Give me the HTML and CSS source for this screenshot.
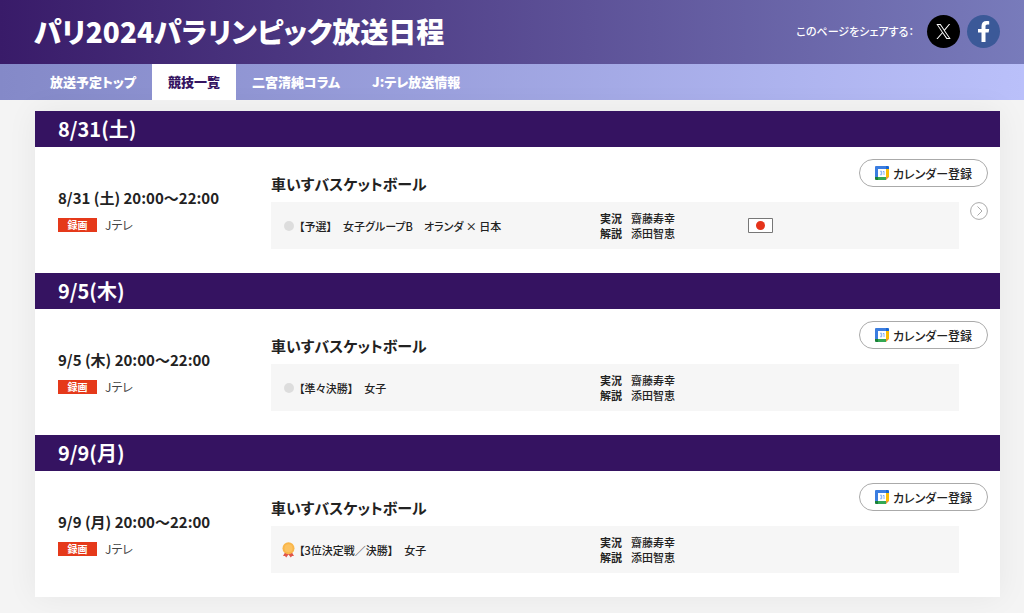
FILE: index.html
```html
<!DOCTYPE html>
<html lang="ja">
<head>
<meta charset="utf-8">
<meta name="viewport" content="width=device-width, initial-scale=1">
<title>パリ2024パラリンピック放送日程</title>
<link rel="stylesheet" href="styles.css">
</head>
<body>
<svg class="sprite" aria-hidden="true">
  <symbol id="calendar" viewBox="0 0 28 28">
    <path fill="#fff" d="M6 6h16v16H6z"/>
    <path fill="#3b7de0" d="M0 2a2 2 0 0 1 2-2h20v6H6v16H0z"/>
    <path fill="#1967d2" d="M22 0h4a2 2 0 0 1 2 2v4h-6z"/>
    <path fill="#fbbc04" d="M22 6h6v16h-6z"/>
    <path fill="#34a853" d="M6 22h16v6H6z"/>
    <path fill="#188038" d="M0 22h6v6H2a2 2 0 0 1-2-2z"/>
    <path fill="#ea9a35" d="M22 22h6l-6 6z"/>
    <path fill="none" stroke="#6b9ff0" stroke-width="1.600" d="M10 10.500h3.500v7H10m1-3.500h2.500M16 11.500l2-1v7.500"/>
  </symbol>
</svg>
<header class="header">
  <h1 class="title">パリ2024パラリンピック放送日程</h1>
  <div class="share">
    <span class="share-label">このページをシェアする：</span>
    <a class="share-link share-x" href="#" aria-label="X">
      <svg viewBox="0 0 24 24" width="15" height="15"><path fill="#fff" d="M14.200 10.200 22.700 0h-2l-7.400 8.800L7.400 0H.6l9 13.400L.6 24h2l7.900-9.300L16.700 24h6.800zM11.400 13.500l-.9-1.300L3.300 1.600h3.200l5.800 8.500.9 1.300 7.600 11.100h-3.100z"/></svg>
    </a>
    <a class="share-link share-fb" href="#" aria-label="Facebook">
      <svg viewBox="0 0 12 21" width="12" height="21"><path fill="#fff" d="M3.500 21v-9.500H0V8h3.500V5.200C3.500 1.800 5.400 0 8.500 0c1.400 0 2.700.2 2.700.2v3.200H9.600C8 3.400 7.500 4.300 7.500 5.400V8h3.700l-.6 3.500H7.500V21z"/></svg>
    </a>
  </div>
</header>
<nav class="nav">
  <a class="tab" href="#">放送予定トップ</a>
  <a class="tab tab-active" href="#" aria-current="page">競技一覧</a>
  <a class="tab" href="#">二宮清純コラム</a>
  <a class="tab" href="#">J:テレ放送情報</a>
</nav>
<main class="schedule">
  <section class="day">
    <h2 class="date">8/31(土)</h2>
    <div class="program">
      <div class="slot">
        <p class="time">8/31 (土) 20:00～22:00</p>
        <p class="channel"><span class="badge">録画</span>Jテレ</p>
      </div>
      <div class="detail">
        <div class="detail-head">
          <h3 class="sport">車いすバスケットボール</h3>
          <button class="calendar" type="button"><svg width="14" height="14" aria-hidden="true"><use href="#calendar"/></svg>カレンダー登録</button>
        </div>
        <div class="detail-body">
          <div class="event">
            <p class="match"><span class="mark"><span class="dot"></span></span>【予選】　女子グループB　オランダ × 日本</p>
            <dl class="cast"><dt>実況</dt><dd>齋藤寿幸</dd><dt>解説</dt><dd>添田智恵</dd></dl>
            <svg class="flag" viewBox="0 0 25 15" width="25" height="15" role="img" aria-label="日本"><path fill="#fff" stroke="#777" d="M.5.5h24v14H.5z"/><circle cx="12.500" cy="7.500" r="4.500" fill="#e5331a"/></svg>
          </div>
          <button class="more" type="button" aria-label="詳細"><svg viewBox="0 0 18 18" width="18" height="18"><circle cx="9" cy="9" r="8.400" fill="none" stroke="#aaa"/><path fill="none" stroke="#aaa" d="m7.500 4.500 4.500 4.500-4.500 4.500"/></svg></button>
        </div>
      </div>
    </div>
  </section>
  <section class="day">
    <h2 class="date">9/5(木)</h2>
    <div class="program">
      <div class="slot">
        <p class="time">9/5 (木) 20:00～22:00</p>
        <p class="channel"><span class="badge">録画</span>Jテレ</p>
      </div>
      <div class="detail">
        <div class="detail-head">
          <h3 class="sport">車いすバスケットボール</h3>
          <button class="calendar" type="button"><svg width="14" height="14" aria-hidden="true"><use href="#calendar"/></svg>カレンダー登録</button>
        </div>
        <div class="detail-body">
          <div class="event">
            <p class="match"><span class="mark"><span class="dot"></span></span>【準々決勝】　女子</p>
            <dl class="cast"><dt>実況</dt><dd>齋藤寿幸</dd><dt>解説</dt><dd>添田智恵</dd></dl>
          </div>
        </div>
      </div>
    </div>
  </section>
  <section class="day">
    <h2 class="date">9/9(月)</h2>
    <div class="program">
      <div class="slot">
        <p class="time">9/9 (月) 20:00～22:00</p>
        <p class="channel"><span class="badge">録画</span>Jテレ</p>
      </div>
      <div class="detail">
        <div class="detail-head">
          <h3 class="sport">車いすバスケットボール</h3>
          <button class="calendar" type="button"><svg width="14" height="14" aria-hidden="true"><use href="#calendar"/></svg>カレンダー登録</button>
        </div>
        <div class="detail-body">
          <div class="event">
            <p class="match"><span class="mark"><svg viewBox="0 0 13 16" width="13" height="16" aria-hidden="true"><path fill="#e0564a" d="M3 10.500 1 14l2 .1 1.200 1.500 2.300-3.200 2.300 3.200L10 14.100l2-.1-2-3.500z"/><circle cx="6.500" cy="6.200" r="6" fill="#f9b64a"/><circle cx="6.500" cy="6.200" r="4" fill="#fcc260"/></svg></span>【3位決定戦／決勝】　女子</p>
            <dl class="cast"><dt>実況</dt><dd>齋藤寿幸</dd><dt>解説</dt><dd>添田智恵</dd></dl>
          </div>
        </div>
      </div>
    </div>
  </section>
</main>
</body>
</html>
```
FILE: styles.css
```css
* {
  box-sizing: border-box;
  margin: 0;
  padding: 0;
}

body {
  background: #f4f4f4;
  color: #222;
  font-family: "Noto Sans CJK JP", sans-serif;
  font-feature-settings: "palt";
  font-size: 11px;
}

button {
  font: inherit;
  font-feature-settings: inherit;
  color: inherit;
  cursor: pointer;
}

a {
  color: inherit;
  text-decoration: none;
}

.sprite {
  display: none;
}

.header {
  display: flex;
  align-items: center;
  justify-content: space-between;
  min-height: 64px;
  padding: 0 24px 2px 34px;
  background: linear-gradient(90deg, #391b69, #787bbb);
  color: #fff;
}

.title {
  font-size: 28px;
  font-weight: 900;
  line-height: 40px;
}

.share {
  display: flex;
  align-items: center;
  gap: 7px;
}

.share-label {
  font-size: 11px;
  font-weight: 500;
  margin-right: 6px;
}

.share-link {
  display: flex;
  align-items: center;
  justify-content: center;
  width: 33px;
  height: 33px;
  border-radius: 50%;
}

.share-x {
  background: #000;
}

.share-fb {
  background: #3b5998;
}

.nav {
  display: flex;
  padding: 0 34px;
  background: linear-gradient(90deg, #8489c8, #bac0fa);
  color: #fff;
}

.tab {
  padding: 0 16px;
  font-size: 13px;
  font-weight: 900;
  line-height: 36px;
}

.tab-active {
  background: #fff;
  color: #351361;
}

.schedule {
  margin: 11px 24px 16px 35px;
  background: #fff;
  box-shadow: 0 0 30px rgba(0, 0, 0, 0.06);
}

.date {
  padding-left: 23px;
  background: #351361;
  color: #fff;
  font-size: 20px;
  font-weight: 700;
  line-height: 36px;
}

.program {
  display: grid;
  grid-template-columns: 213px 1fr;
  padding: 12px 12px 24px 23px;
}

.slot {
  padding-top: 28px;
}

.time {
  font-size: 15px;
  font-weight: 700;
  line-height: 22px;
}

.channel {
  display: flex;
  align-items: center;
  gap: 8px;
  margin-top: 8px;
  font-size: 12px;
  line-height: 16px;
  color: #444;
}

.badge {
  width: 39px;
  background: #e5391a;
  color: #fff;
  font-size: 10px;
  font-weight: 700;
  line-height: 14px;
  text-align: center;
}

.detail-head {
  display: flex;
  justify-content: space-between;
  margin-bottom: 7px;
}

.sport {
  padding-top: 14px;
  font-size: 15px;
  font-weight: 700;
  line-height: 22px;
}

.calendar {
  display: flex;
  align-items: center;
  justify-content: center;
  gap: 4px;
  width: 129px;
  height: 28px;
  border: 1px solid #aaa;
  border-radius: 14px;
  background: #fff;
  font-size: 12px;
  font-weight: 500;
}

.detail-body {
  display: grid;
  grid-template-columns: 1fr 18px;
  gap: 11px;
  align-items: start;
}

.event {
  display: grid;
  grid-template-columns: 329fr 148fr 211fr;
  align-items: center;
  min-height: 47px;
  background: #f6f6f6;
}

.match {
  display: flex;
  align-items: center;
  gap: 4px;
  padding-left: 11px;
  font-weight: 500;
}

.mark {
  display: flex;
  justify-content: center;
  width: 13px;
}

.dot {
  width: 10px;
  height: 10px;
  border-radius: 50%;
  background: #ddd;
}

.cast {
  display: grid;
  grid-template-columns: auto 1fr;
  column-gap: 9px;
  line-height: 15px;
  font-weight: 500;
}

.cast dt {
  font-weight: 700;
}

.more {
  display: flex;
  border: 0;
  background: none;
}
```
